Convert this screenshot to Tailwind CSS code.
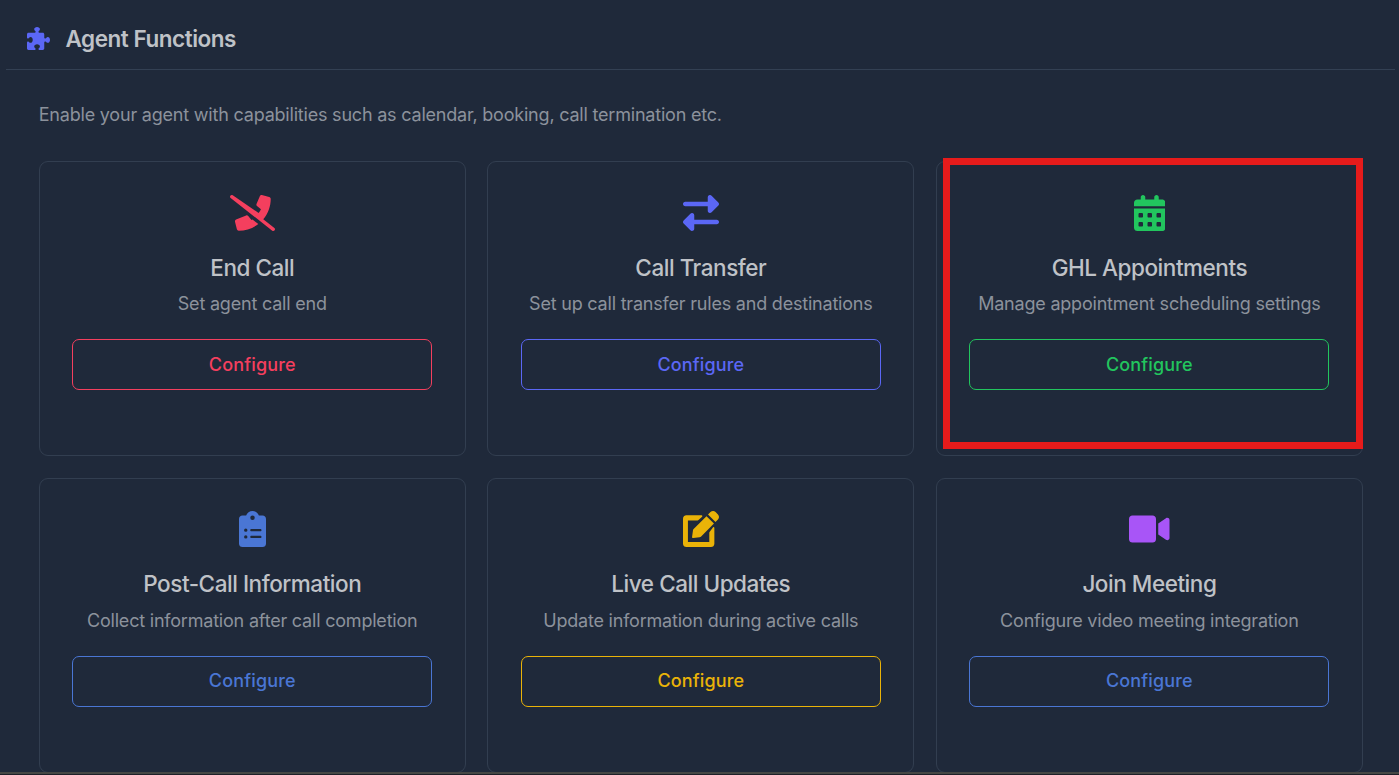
<!DOCTYPE html>
<html lang="en">
<head>
<meta charset="utf-8">
<title>Agent Functions</title>
<script src="https://cdn.jsdelivr.net/npm/@tailwindcss/browser@4"></script>
</head>
<body class="h-[775px] overflow-hidden bg-[#1f293a] font-['Inter',sans-serif]">
<div class="relative flex h-[775px] flex-col overflow-hidden">
  <header class="ml-1.5 mr-1 flex h-[70px] shrink-0 items-center border-b border-[#334053] pl-[21px] pt-[9px]">
    <svg class="-mt-px size-[23px] fill-[#5b67f5]" viewBox="0 0 512 512"><path d="M512 288c0 35.35-21.49 64-48 64c-32.43 0-31.72-32-55.64-32C394.9 320 384 330.9 384 344.4V480c0 17.67-14.33 32-32 32h-71.64C266.9 512 256 501.1 256 487.6C256 463.1 288 464.4 288 432c0-26.51-28.65-48-64-48s-64 21.49-64 48c0 32.43 32 31.72 32 55.64C192 501.1 181.1 512 167.6 512H32c-17.67 0-32-14.33-32-32v-135.6C0 330.9 10.91 320 24.36 320C47.75 320 48.28 352 80 352C106.5 352 128 323.3 128 288S106.5 224 80 224c-31.72 0-32.25 32-55.64 32C10.91 256 0 245.1 0 231.6v-71.64c0-17.67 14.33-32 32-32h135.6C181.1 128 192 117.1 192 103.6c0-23.69-32-23.42-32-55.64C160 21.49 188.7 0 224 0s64 21.49 64 48c0 32.22-32 31.95-32 55.64c0 13.45 10.91 24.36 24.36 24.36H352c17.67 0 32 14.33 32 32v71.64c0 13.45 10.91 24.36 24.36 24.36c23.69 0 23.42-32 55.64-32C490.5 224 512 252.7 512 288z"/></svg>
    <h1 class="ml-[15.5px] text-[22.5px] leading-8 font-semibold tracking-[-0.47px] text-[#bfc2c7]">Agent Functions</h1>
  </header>
  <main class="flex flex-col pl-[38.75px] pr-[36.1px] pt-[31px]">
    <p class="text-[18px] leading-7 tracking-[-0.205px] text-[#8c929c]">Enable your agent with capabilities such as calendar, booking, call termination etc.</p>
    <div class="mt-8 grid grid-cols-3 gap-x-[21.5px] gap-y-[22px]">
      <section class="flex h-[295px] flex-col items-center rounded-[9px] border border-[#323e50] px-[32.6px] pt-[33px] text-center">
        <svg class="h-9 w-[45px] fill-[#f43f5e]" viewBox="0 0 640 512"><path d="M39 5C28-3 13-1 5 9S-1 35 9 43l592 464c10 8 26 6 34-4s6-26-4-34L473 345c66-78 106-180 106-289 0-14-9-25-22-28L453 1c-12-3-24 3-29 15l-47 112c-4 10-1 22 7 29l56 46c-9 19-20 37-33 53zM320 348l-14 7-47-56c-7-9-19-12-29-8L86 350c-12 5-18 17-15 29l27 108c3 12 14 21 26 21 102 0 203-35 279-96z"/></svg>
        <h2 class="mt-[21px] text-[22.5px] leading-8 font-medium tracking-[-0.46px] text-[#bfc2c7]">End Call</h2>
        <p class="mt-[6px] text-[18px] leading-7 tracking-[-0.205px] text-[#8c929c]">Set agent call end</p>
        <button class="mt-[21px] h-[51px] w-full rounded-[7px] border border-[#f43f5e] text-[18px] font-medium tracking-[0.15px] text-[#f43f5e]">Configure</button>
      </section>
      <section class="flex h-[295px] flex-col items-center rounded-[9px] border border-[#323e50] px-[32.6px] pt-[33px] text-center">
        <svg class="size-9 fill-[#5b67f5]" viewBox="0 0 512 512"><path d="M32 96l320 0V32c0-12.9 7.8-24.6 19.8-29.6s25.7-2.2 34.9 6.9l96 96c6 6 9.4 14.1 9.4 22.6s-3.4 16.6-9.4 22.6l-96 96c-9.2 9.2-22.9 11.9-34.9 6.9s-19.8-16.6-19.8-29.6V160L32 160c-17.7 0-32-14.3-32-32s14.3-32 32-32zM480 352c17.7 0 32 14.3 32 32s-14.3 32-32 32H160v64c0 12.9-7.8 24.6-19.8 29.6s-25.7 2.2-34.9-6.9l-96-96c-6-6-9.4-14.1-9.4-22.6s3.4-16.6 9.4-22.6l96-96c9.2-9.2 22.9-11.9 34.9-6.9s19.8 16.6 19.8 29.6l0 64H480z"/></svg>
        <h2 class="mt-[21px] text-[22.5px] leading-8 font-medium tracking-[-0.46px] text-[#bfc2c7]">Call Transfer</h2>
        <p class="mt-[6px] text-[18px] leading-7 tracking-[-0.205px] text-[#8c929c]">Set up call transfer rules and destinations</p>
        <button class="mt-[21px] h-[51px] w-full rounded-[7px] border border-[#5b67f5] text-[18px] font-medium tracking-[0.15px] text-[#5b67f5]">Configure</button>
      </section>
      <section class="relative flex h-[295px] flex-col items-center rounded-[9px] border border-[#323e50] px-[32.6px] pt-[33px] text-center">
        <svg class="h-9 w-[31.5px] fill-[#22c55e]" viewBox="0 0 448 512"><path d="M128 0c17.7 0 32 14.3 32 32V64H288V32c0-17.7 14.3-32 32-32s32 14.3 32 32V64h48c26.5 0 48 21.5 48 48v48H0V112C0 85.5 21.5 64 48 64H96V32c0-17.7 14.3-32 32-32zM0 192H448V464c0 26.5-21.5 48-48 48H48c-26.5 0-48-21.5-48-48V192zm64 80v32c0 8.8 7.2 16 16 16h32c8.8 0 16-7.2 16-16V272c0-8.8-7.2-16-16-16H80c-8.8 0-16 7.2-16 16zm128 0v32c0 8.8 7.2 16 16 16h32c8.8 0 16-7.2 16-16V272c0-8.8-7.2-16-16-16H208c-8.8 0-16 7.2-16 16zm144-16c-8.8 0-16 7.2-16 16v32c0 8.8 7.2 16 16 16h32c8.8 0 16-7.2 16-16V272c0-8.8-7.2-16-16-16H336zM64 400v32c0 8.8 7.2 16 16 16h32c8.8 0 16-7.2 16-16V400c0-8.8-7.2-16-16-16H80c-8.8 0-16 7.2-16 16zm144-16c-8.8 0-16 7.2-16 16v32c0 8.8 7.2 16 16 16h32c8.8 0 16-7.2 16-16V400c0-8.8-7.2-16-16-16H208zm112 16v32c0 8.8 7.2 16 16 16h32c8.8 0 16-7.2 16-16V400c0-8.8-7.2-16-16-16H336c-8.8 0-16 7.2-16 16z"/></svg>
        <h2 class="mt-[21px] text-[22.5px] leading-8 font-medium tracking-[-0.46px] text-[#bfc2c7]">GHL Appointments</h2>
        <p class="mt-[6px] text-[18px] leading-7 tracking-[-0.205px] text-[#8c929c]">Manage appointment scheduling settings</p>
        <button class="mt-[21px] h-[51px] w-full rounded-[7px] border border-[#22c55e] text-[18px] font-medium tracking-[0.15px] text-[#22c55e]">Configure</button>
        <div class="pointer-events-none absolute -top-1 left-[6px] h-[291px] w-[420.5px] border-[7.5px] border-[#e61b1b]"></div>
      </section>
      <section class="flex h-[295px] flex-col items-center rounded-[9px] border border-[#323e50] px-[32.6px] pt-[32px] text-center">
        <svg class="h-9 w-[27px] fill-[#4a76d4]" viewBox="0 0 384 512"><path d="M192 0c-41.8 0-77.4 26.7-90.5 64H48C21.5 64 0 85.5 0 112V464c0 26.5 21.5 48 48 48H336c26.5 0 48-21.5 48-48V112c0-26.5-21.5-48-48-48H282.5C269.4 26.7 233.8 0 192 0zm0 64a32 32 0 1 1 0 64 32 32 0 1 1 0-64zM72 272a24 24 0 1 1 48 0 24 24 0 1 1 -48 0zm104-16H304c8.8 0 16 7.2 16 16s-7.2 16-16 16H176c-8.8 0-16-7.2-16-16s7.2-16 16-16zM72 368a24 24 0 1 1 48 0 24 24 0 1 1 -48 0zm88 0c0-8.8 7.2-16 16-16H304c8.8 0 16 7.2 16 16s-7.2 16-16 16H176c-8.8 0-16-7.2-16-16z"/></svg>
        <h2 class="mt-[21px] text-[22.5px] leading-8 font-medium tracking-[-0.46px] text-[#bfc2c7]">Post-Call Information</h2>
        <p class="mt-[7px] text-[18px] leading-7 tracking-[-0.205px] text-[#8c929c]">Collect information after call completion</p>
        <button class="mt-[21px] h-[51px] w-full rounded-[7px] border border-[#4a76d4] pb-[3px] text-[18px] font-medium tracking-[0.15px] text-[#4a76d4]">Configure</button>
      </section>
      <section class="flex h-[295px] flex-col items-center rounded-[9px] border border-[#323e50] px-[32.6px] pt-[32px] text-center">
        <svg class="size-9 fill-[#eab308]" viewBox="0 0 512 512"><path d="M497 49 463 15c-20-20-52-20-72 0l-35 35 106 106 35-35c20-20 20-52 0-72zM334 73 151 256c-5 5-8 12-9 19l-13 93c-1 9 6 17 16 16l91-10c8-1 16-4 22-10l182-185zM374 309V442H70V134H208c5 0 9-2 12-5l52-49c7-7 2-18-8-18H48C21 62 0 83 0 110V464c0 27 21 48 48 48H398c27 0 48-21 48-48V240c0-10-11-15-18-8l-48 62c-4 4-6 9-6 15z"/></svg>
        <h2 class="mt-[21px] text-[22.5px] leading-8 font-medium tracking-[-0.46px] text-[#bfc2c7]">Live Call Updates</h2>
        <p class="mt-[7px] text-[18px] leading-7 tracking-[-0.205px] text-[#8c929c]">Update information during active calls</p>
        <button class="mt-[21px] h-[51px] w-full rounded-[7px] border border-[#eab308] pb-[3px] text-[18px] font-medium tracking-[0.15px] text-[#eab308]">Configure</button>
      </section>
      <section class="flex h-[295px] flex-col items-center rounded-[9px] border border-[#323e50] px-[32.6px] pt-[32px] text-center">
        <svg class="h-9 w-[40.5px] fill-[#a855f7]" viewBox="0 0 576 512"><path d="M384 112v288c0 26.51-21.49 48-48 48h-288c-26.51 0-48-21.49-48-48v-288c0-26.51 21.49-48 48-48h288C362.5 64 384 85.49 384 112zM576 127.5v256.9c0 25.5-29.17 40.39-50.39 25.79L416 334.7V177.3l109.6-75.56C546.9 87.13 576 102.1 576 127.5z"/></svg>
        <h2 class="mt-[21px] text-[22.5px] leading-8 font-medium tracking-[-0.46px] text-[#bfc2c7]">Join Meeting</h2>
        <p class="mt-[7px] text-[18px] leading-7 tracking-[-0.205px] text-[#8c929c]">Configure video meeting integration</p>
        <button class="mt-[21px] h-[51px] w-full rounded-[7px] border border-[#4a76d4] pb-[3px] text-[18px] font-medium tracking-[0.15px] text-[#4a76d4]">Configure</button>
      </section>
    </div>
  </main>
  <div class="absolute inset-x-0 bottom-0 h-[3px] border-t-2 border-[#454744] bg-[#1d2028]"></div>
</div>
</body>
</html>
